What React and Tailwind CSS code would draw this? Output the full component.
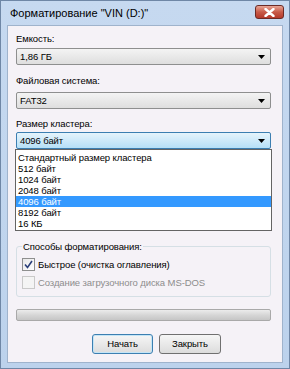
const FONT = { fontFamily: '"Liberation Sans", "DejaVu Sans", sans-serif' };

const Arrow = () => (
  <svg width="7" height="4" viewBox="0 0 7 4" className="shrink-0">
    <path d="M0 0 H7 L3.5 4 Z" fill="#000" />
  </svg>
);

// поле со списком в стиле Windows 7
const Combo = ({ value, active }) => (
  <div
    className={
      "h-[17px] flex items-center justify-between pl-[3px] pr-[5px] rounded-[2px] border " +
      (active
        ? "border-[#3c7fb1] bg-gradient-to-b from-[#e5f4fc] to-[#b6e0f7]"
        : "border-[#8e8f8f] bg-gradient-to-b from-[#f4f4f4] to-[#dedede]")
    }
  >
    <span className="leading-none text-black">{value}</span>
    <Arrow />
  </div>
);

const sizes = [
  "Стандартный размер кластера",
  "512 байт",
  "1024 байт",
  "2048 байт",
  "4096 байт",
  "8192 байт",
  "16 КБ",
];

export default function App() {
  return (
    <div
      className="w-[290px] h-[369px] flex flex-col bg-gradient-to-b from-[#c6d9f0] to-[#bcd2ec] border border-[#6f87a6]"
      style={FONT}
    >
      {/* заголовок окна */}
      <div className="h-[24px] flex items-start justify-between pl-[9px] pr-[5px]">
        <span className="mt-[6px] text-[11px] leading-[13px] text-black">Форматирование "VIN (D:)"</span>
        <div className="mt-[4px] w-[29px] h-[14px] rounded-[3px] border border-[#6b2a25] bg-gradient-to-b from-[#e8a595] via-[#c85a48] to-[#b4382a] flex items-center justify-center">
          <svg width="11" height="9" viewBox="0 0 11 9">
            <path d="M1.5 1 L9.5 8 M9.5 1 L1.5 8" stroke="#fff" strokeWidth="2.4" strokeLinecap="round" />
          </svg>
        </div>
      </div>

      {/* рабочая область */}
      <div className="flex-1 mx-[6px] mb-[5px] bg-[#f5f2f7] border border-[#9fb3cc] pl-[8px] pr-[11px] text-[9.5px] tracking-[-0.1px] text-black">
        <div className="mt-[6px] leading-[13px]">Емкость:</div>
        <div className="mt-[3px]">
          <Combo value="1,86 ГБ" />
        </div>

        <div className="mt-[9px] leading-[13px]">Файловая система:</div>
        <div className="mt-[5px]">
          <Combo value="FAT32" />
        </div>

        <div className="mt-[8px] leading-[13px]">Размер кластера:</div>
        <div className="mt-[2px]">
          <Combo value="4096 байт" active />
        </div>

        {/* раскрытый список */}
        <div className="-mx-[1px] border border-[#646464] bg-white pt-[2px] pb-[1px]">
          {sizes.map((s) => (
            <div
              key={s}
              className={
                "h-[11px] leading-[11px] pl-[2px] " +
                (s === "4096 байт" ? "bg-[#3399ff] text-white" : "text-black")
              }
            >
              {s}
            </div>
          ))}
        </div>

        {/* способы форматирования */}
        <div className="mt-[15px] border border-[#d5dfe5] rounded-[3px] px-[5px] pb-[7px]">
          <div className="-mt-[7px] w-fit bg-[#f5f2f7] px-[1px] leading-[13px]">Способы форматирования:</div>
          <div className="mt-[5px] flex items-center gap-[3px]">
            <div className="w-[13px] h-[13px] border border-[#8e8f8f] bg-gradient-to-br from-[#e8e8e8] to-white flex items-center justify-center">
              <svg width="9" height="9" viewBox="0 0 9 9">
                <path d="M1 4.5 L3.5 7.5 L8 1" fill="none" stroke="#2b3f7a" strokeWidth="1.6" />
              </svg>
            </div>
            <span className="leading-[13px]">Быстрое (очистка оглавления)</span>
          </div>
          <div className="mt-[5px] flex items-center gap-[3px]">
            <div className="w-[13px] h-[13px] border border-[#c9c9c9] bg-[#f4f4f4]" />
            <span className="leading-[13px] text-[#8d8d8d]">Создание загрузочного диска MS-DOS</span>
          </div>
        </div>

        {/* индикатор */}
        <div className="mt-[12px] h-[12px] rounded-[2px] border border-[#a9a9a9] bg-gradient-to-b from-[#ececec] via-[#d6d6d6] to-[#c6c6c6]" />

        {/* кнопки */}
        <div className="mt-[13px] flex gap-[6px] ml-[76px]">
          <button className="w-[61px] h-[20px] rounded-[3px] border border-[#3c7fb1] bg-gradient-to-b from-[#f6f6f6] to-[#dcdcdc] shadow-[inset_0_0_0_1px_#c4e5f6]">
            Начать
          </button>
          <button className="w-[62px] h-[20px] rounded-[3px] border border-[#707070] bg-gradient-to-b from-[#f6f6f6] to-[#dcdcdc]">
            Закрыть
          </button>
        </div>
      </div>
    </div>
  );
}
